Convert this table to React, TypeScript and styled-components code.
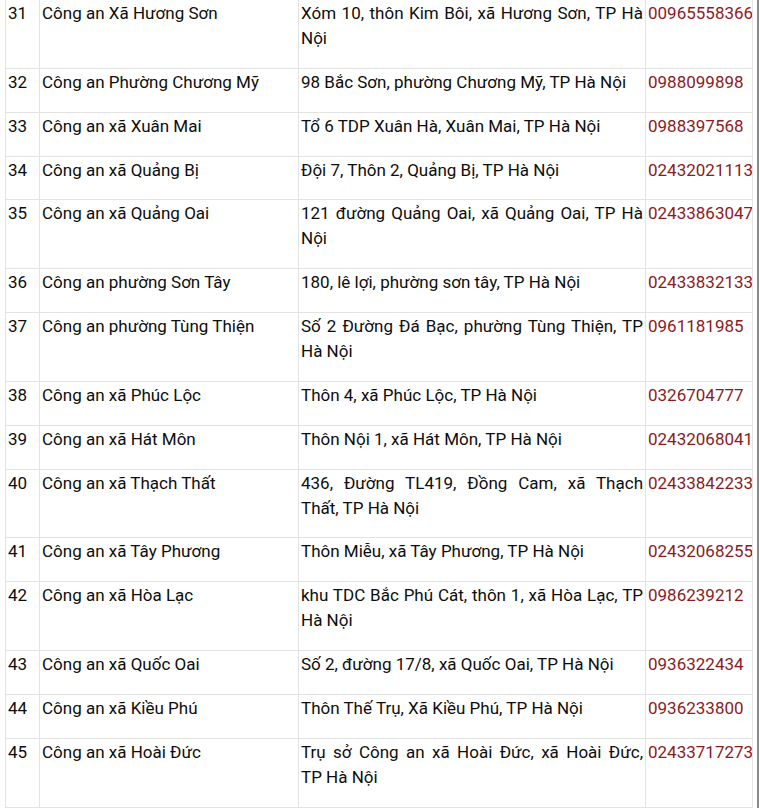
import React from 'react';
import styled, { createGlobalStyle } from 'styled-components';

const GlobalStyle = createGlobalStyle`
  html, body {
    margin: 0;
    padding: 0;
    background: #ffffff;
  }
  body {
    font-family: Roboto, "Liberation Sans", Arial, sans-serif;
  }
`;

const Page = styled.div`
  width: 757px;
  height: 808px;
  overflow: hidden;
  border-right: 2px solid #8a8a8a;
`;

const Table = styled.table`
  margin: -1px 0 0 5px;
  width: 747px;
  border-collapse: collapse;
  table-layout: fixed;
  font-size: 17px;
  line-height: 25px;
  color: #0d0d0d;
`;

const Col = styled.col<{ $w: number }>`
  width: ${(p) => p.$w}px;
`;

const Cell = styled.td<{ $phone?: boolean; $justify?: boolean }>`
  border: 1px solid #e3e3e3;
  padding: 1px 2px 16.85px 2px;
  vertical-align: top;
  text-align: ${(p) => (p.$justify ? 'justify' : 'left')};
  color: ${(p) => (p.$phone ? '#8c1a1e' : 'inherit')};
  overflow: hidden;
  white-space: ${(p) => (p.$phone ? 'nowrap' : 'normal')};
`;

type Row = { no: number; name: string; address: string; phone: string };

const rows: Row[] = [
  { no: 31, name: 'Công an Xã Hương Sơn', address: 'Xóm 10, thôn Kim Bôi, xã Hương Sơn, TP Hà Nội', phone: '00965558366' },
  { no: 32, name: 'Công an Phường Chương Mỹ', address: '98 Bắc Sơn, phường Chương Mỹ, TP Hà Nội', phone: '0988099898' },
  { no: 33, name: 'Công an xã Xuân Mai', address: 'Tổ 6 TDP Xuân Hà, Xuân Mai, TP Hà Nội', phone: '0988397568' },
  { no: 34, name: 'Công an xã Quảng Bị', address: 'Đội 7, Thôn 2, Quảng Bị, TP Hà Nội', phone: '02432021113' },
  { no: 35, name: 'Công an xã Quảng Oai', address: '121 đường Quảng Oai, xã Quảng Oai, TP Hà Nội', phone: '02433863047' },
  { no: 36, name: 'Công an phường Sơn Tây', address: '180, lê lợi, phường sơn tây, TP Hà Nội', phone: '02433832133' },
  { no: 37, name: 'Công an phường Tùng Thiện', address: 'Số 2 Đường Đá Bạc, phường Tùng Thiện, TP Hà Nội', phone: '0961181985' },
  { no: 38, name: 'Công an xã Phúc Lộc', address: 'Thôn 4, xã Phúc Lộc, TP Hà Nội', phone: '0326704777' },
  { no: 39, name: 'Công an xã Hát Môn', address: 'Thôn Nội 1, xã Hát Môn, TP Hà Nội', phone: '02432068041' },
  { no: 40, name: 'Công an xã Thạch Thất', address: '436, Đường TL419, Đồng Cam, xã Thạch Thất, TP Hà Nội', phone: '02433842233' },
  { no: 41, name: 'Công an xã Tây Phương', address: 'Thôn Miễu, xã Tây Phương, TP Hà Nội', phone: '02432068255' },
  { no: 42, name: 'Công an xã Hòa Lạc', address: 'khu TDC Bắc Phú Cát, thôn 1, xã Hòa Lạc, TP Hà Nội', phone: '0986239212' },
  { no: 43, name: 'Công an xã Quốc Oai', address: 'Số 2, đường 17/8, xã Quốc Oai, TP Hà Nội', phone: '0936322434' },
  { no: 44, name: 'Công an xã Kiều Phú', address: 'Thôn Thế Trụ, Xã Kiều Phú, TP Hà Nội', phone: '0936233800' },
  // "TP Hà" is kept together here, as in the source page
  { no: 45, name: 'Công an xã Hoài Đức', address: 'Trụ sở Công an xã Hoài Đức, xã Hoài Đức, TP\u00a0Hà Nội', phone: '02433717273' },
];

export default function App() {
  return (
    <Page>
      <GlobalStyle />
      <Table>
        <colgroup>
          <Col $w={34} />
          <Col $w={259} />
          <Col $w={347} />
          <Col $w={107} />
        </colgroup>
        <tbody>
          {rows.map((r) => (
            <tr key={r.no}>
              <Cell>{r.no}</Cell>
              <Cell>{r.name}</Cell>
              <Cell $justify>{r.address}</Cell>
              <Cell $phone>{r.phone}</Cell>
            </tr>
          ))}
        </tbody>
      </Table>
    </Page>
  );
}
